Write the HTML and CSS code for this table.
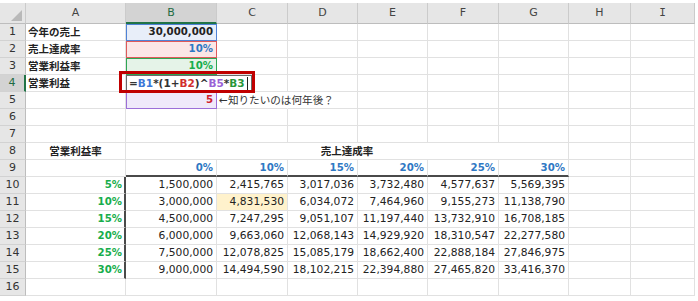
FILE: index.html
```html
<!DOCTYPE html>
<html lang="ja">
<head>
<meta charset="utf-8">
<title>Sheet</title>
<link rel="stylesheet" href="styles.css">
</head>
<body>
<div class="sheet">
  <div class="h corner"><svg width="26" height="21" viewBox="0 0 26 21"><polygon points="22,7 22,18 11,18" fill="#b9b9b9"/></svg></div>
  <div class="h">A</div><div class="h hsel">B</div><div class="h">C</div><div class="h">D</div><div class="h">E</div><div class="h">F</div><div class="h">G</div><div class="h">H</div><div class="h"><span class="serifI">I</span></div>

  <div class="rh">1</div><div class="c b jp">今年の売上</div><div class="c r b hb">30,000,000</div><div class="c"></div><div class="c"></div><div class="c"></div><div class="c"></div><div class="c"></div><div class="c"></div><div class="c"></div>

  <div class="rh">2</div><div class="c b jp">売上達成率</div><div class="c r b hr blue">10%</div><div class="c"></div><div class="c"></div><div class="c"></div><div class="c"></div><div class="c"></div><div class="c"></div><div class="c"></div>

  <div class="rh">3</div><div class="c b jp">営業利益率</div><div class="c r b hg green">10%</div><div class="c"></div><div class="c"></div><div class="c"></div><div class="c"></div><div class="c"></div><div class="c"></div><div class="c"></div>

  <div class="rh rsel">4</div><div class="c b jp">営業利益</div>
  <div class="c edit">
    <div class="editbox"><span class="op">=</span><span class="f1">B1</span><span class="op">*(1+</span><span class="f2">B2</span><span class="op">)^</span><span class="f5">B5</span><span class="op">*</span><span class="f3">B3</span><span class="cursor"></span></div>
    <div class="mark"></div>
  </div>
  <div class="c"></div><div class="c"></div><div class="c"></div><div class="c"></div><div class="c"></div><div class="c"></div><div class="c"></div>

  <div class="rh">5</div><div class="c"></div><div class="c r b hp red">5</div><div class="c nbr note">←知りたいのは何年後？</div><div class="c"></div><div class="c"></div><div class="c"></div><div class="c"></div><div class="c"></div><div class="c"></div>

  <div class="rh">6</div><div class="c"></div><div class="c"></div><div class="c"></div><div class="c"></div><div class="c"></div><div class="c"></div><div class="c"></div><div class="c"></div><div class="c"></div>

  <div class="rh">7</div><div class="c"></div><div class="c"></div><div class="c"></div><div class="c"></div><div class="c"></div><div class="c"></div><div class="c"></div><div class="c"></div><div class="c"></div>

  <div class="rh">8</div><div class="c b jp ctr">営業利益率</div><div class="c b jp ctr span6">売上達成率</div><div class="c"></div><div class="c"></div>

  <div class="rh">9</div><div class="c"></div><div class="c r b blue thb">0%</div><div class="c r b blue thb">10%</div><div class="c r b blue thb">15%</div><div class="c r b blue thb">20%</div><div class="c r b blue thb">25%</div><div class="c r b blue thb">30%</div><div class="c"></div><div class="c"></div>

  <div class="rh">10</div><div class="c r b green thr">5%</div><div class="c r">1,500,000</div><div class="c r">2,415,765</div><div class="c r">3,017,036</div><div class="c r">3,732,480</div><div class="c r">4,577,637</div><div class="c r">5,569,395</div><div class="c"></div><div class="c"></div>

  <div class="rh">11</div><div class="c r b green thr">10%</div><div class="c r">3,000,000</div><div class="c r hl">4,831,530</div><div class="c r">6,034,072</div><div class="c r">7,464,960</div><div class="c r">9,155,273</div><div class="c r">11,138,790</div><div class="c"></div><div class="c"></div>

  <div class="rh">12</div><div class="c r b green thr">15%</div><div class="c r">4,500,000</div><div class="c r">7,247,295</div><div class="c r">9,051,107</div><div class="c r">11,197,440</div><div class="c r">13,732,910</div><div class="c r">16,708,185</div><div class="c"></div><div class="c"></div>

  <div class="rh">13</div><div class="c r b green thr">20%</div><div class="c r">6,000,000</div><div class="c r">9,663,060</div><div class="c r">12,068,143</div><div class="c r">14,929,920</div><div class="c r">18,310,547</div><div class="c r">22,277,580</div><div class="c"></div><div class="c"></div>

  <div class="rh">14</div><div class="c r b green thr">25%</div><div class="c r">7,500,000</div><div class="c r">12,078,825</div><div class="c r">15,085,179</div><div class="c r">18,662,400</div><div class="c r">22,888,184</div><div class="c r">27,846,975</div><div class="c"></div><div class="c"></div>

  <div class="rh">15</div><div class="c r b green thr">30%</div><div class="c r">9,000,000</div><div class="c r">14,494,590</div><div class="c r">18,102,215</div><div class="c r">22,394,880</div><div class="c r">27,465,820</div><div class="c r">33,416,370</div><div class="c"></div><div class="c"></div>

  <div class="rh">16</div><div class="c"></div><div class="c"></div><div class="c"></div><div class="c"></div><div class="c"></div><div class="c"></div><div class="c"></div><div class="c"></div><div class="c"></div>
</div>
</body>
</html>
```

FILE: styles.css
```css
* { box-sizing: border-box; }

body {
  margin: 0;
  background: #ffffff;
  font-family: "DejaVu Sans", "Noto Sans CJK JP", sans-serif;
  font-size: 10.7px;
  color: #222222;
}

.sheet {
  display: grid;
  grid-template-columns: 26px 100px 91px 71px 70px 70px 71px 70px 62px 64px;
  grid-template-rows: 21px repeat(16, 17px);
  width: 695px;
  margin-top: 3px;
}

.h {
  background: #e6e6e6;
  border-right: 1px solid #cbcbcb;
  border-bottom: 1px solid #bdbdbd;
  text-align: center;
  line-height: 20px;
  font-size: 11px;
  color: #444444;
}

.corner { padding: 0; line-height: 0; }

.hsel {
  background: #d3d3d3;
  color: #1f6b43;
  border-bottom: 2px solid #217346;
}

.serifI { font-family: "DejaVu Sans Mono", monospace; }

.rh {
  background: #e6e6e6;
  border-right: 1px solid #bdbdbd;
  border-bottom: 1px solid #d2d2d2;
  text-align: center;
  line-height: 16px;
  font-size: 11px;
  color: #333333;
}

.rsel {
  background: #d3d3d3;
  color: #1f6b43;
  border-right: 2px solid #217346;
}

.c {
  border-right: 1px solid #e1e1e1;
  border-bottom: 1px solid #e1e1e1;
  line-height: 16px;
  white-space: nowrap;
  padding: 0 2px;
}

.r { text-align: right; padding-right: 3px; }
.ctr { text-align: center; }
.b { font-weight: bold; font-size: 10.2px; }
.jp { font-size: 10.5px; }
.nbr { border-right-color: transparent; }
.note { font-size: 10.6px; color: #333333; padding-left: 2px; }

.span6 { grid-column: span 6; }

.blue { color: #2f78c4; }
.green { color: #17ad4c; }
.red { color: #d0202c; }

.hb { background: #e8eef9; outline: 1px solid #4f82d6; outline-offset: -1px; }
.hr { background: #fbe6e6; outline: 1px solid #de5a5a; outline-offset: -1px; }
.hg { background: #e5f3e8; outline: 1px solid #2ea653; outline-offset: -1px; }
.hp { background: #efe9fa; outline: 1px solid #9c6fd8; outline-offset: -1px; }

.hl { background: #fff2cc; }

.thb { border-bottom: 2px solid #4a4a4a; }
.thr { border-right: 2px solid #4a4a4a; padding-right: 2px; }

.edit {
  position: relative;
  z-index: 3;
  padding: 0;
}

.editbox {
  position: absolute;
  left: 0;
  top: 0;
  width: 126px;
  height: 17px;
  background: #ffffff;
  border: 1px solid #6a6a6a;
  padding-left: 2px;
  line-height: 15px;
  font-weight: bold;
  font-size: 10.5px;
  display: flex;
  align-items: center;
}

.op { color: #333333; }
.f1 { color: #3d78d8; }
.f2 { color: #d12e2e; }
.f5 { color: #9a62d6; }
.f3 { color: #28963a; }

.cursor {
  display: inline-block;
  width: 1px;
  height: 13px;
  background: #222222;
  margin-left: 2px;
}

.mark {
  position: absolute;
  left: -7px;
  top: -4px;
  width: 136px;
  height: 22px;
  border: 3px solid #c00000;
}
```
